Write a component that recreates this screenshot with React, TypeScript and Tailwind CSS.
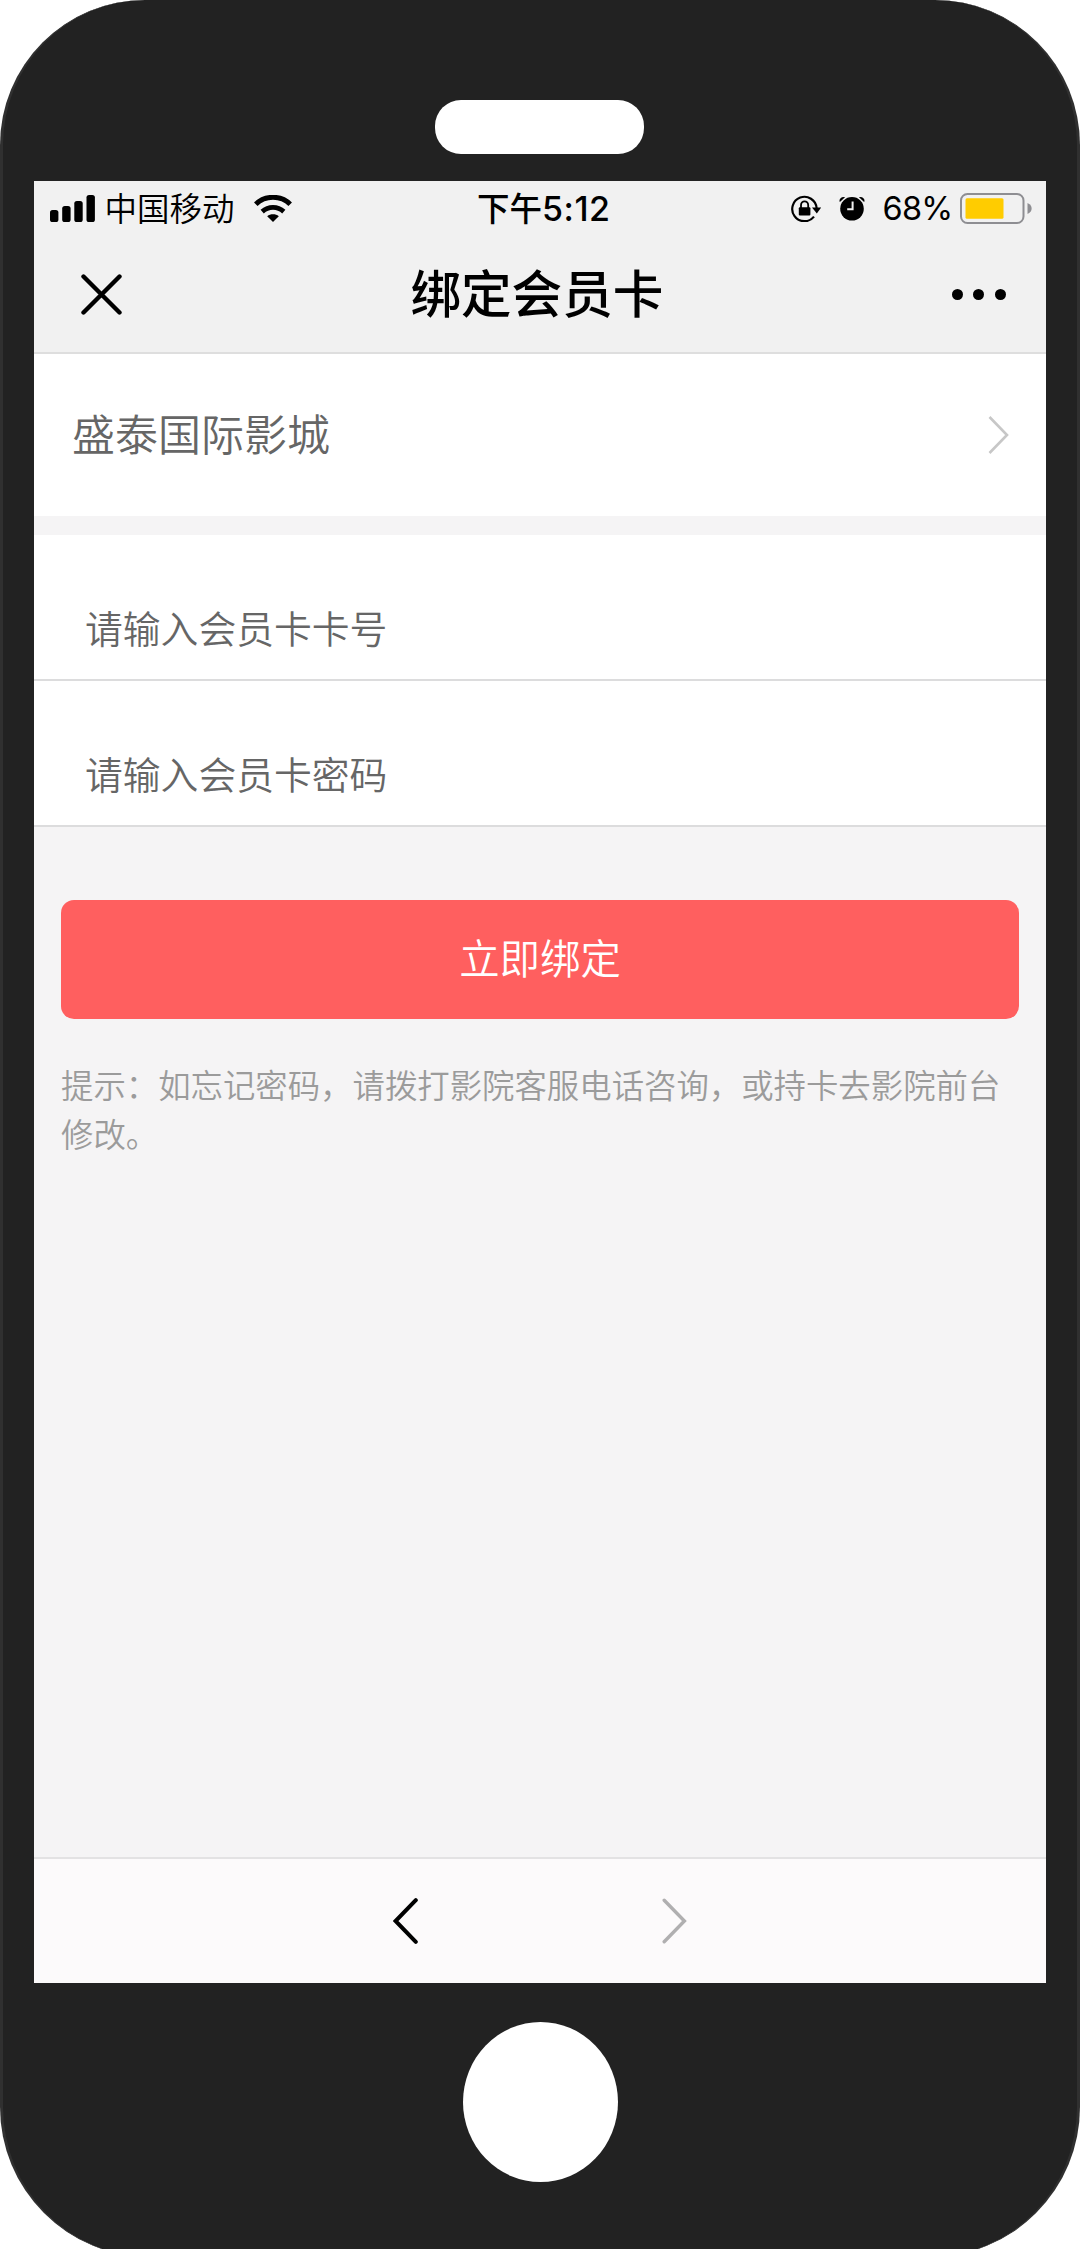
interface FieldRowProps {
  label: string;
}

function SignalIcon() {
  return (
    <svg width="45" height="27" viewBox="0 0 45 27">
      <rect x="0" y="15" width="8.4" height="12" rx="2.6" />
      <rect x="12.2" y="11" width="8.4" height="16" rx="2.6" />
      <rect x="24.3" y="6" width="8.4" height="21" rx="2.6" />
      <rect x="36.5" y="0" width="8.4" height="27" rx="2.6" />
    </svg>
  );
}

function WifiIcon() {
  return (
    <svg width="38" height="27" viewBox="0 0 38 27" fill="none" stroke="#000">
      <path d="M1.8 9.2C11.2 0 26.8 0 36.2 9.2" strokeWidth="5" />
      <path d="M8.2 16.6C14.4 11 23.6 11 29.8 16.6" strokeWidth="4.8" />
      <path
        d="M19 27L13.2 21.2C16.4 18.6 21.6 18.6 24.8 21.2Z"
        fill="#000"
        stroke="none"
      />
    </svg>
  );
}

function RotationLockIcon() {
  return (
    <svg width="30" height="27" viewBox="0 0 30 27" fill="none">
      <path
        d="M25.6 13A12.2 12.2 0 1 0 23 21.6"
        stroke="#000"
        strokeWidth="2.2"
      />
      <path d="M21 12.6H30.2L25.8 18.6Z" fill="#000" />
      <rect x="7.8" y="12.3" width="11.6" height="8.2" rx="1" fill="#000" />
      <path
        d="M10 13V10.2A3.6 3.9 0 0 1 17.2 10.2V13"
        stroke="#000"
        strokeWidth="1.8"
      />
    </svg>
  );
}

function AlarmIcon() {
  return (
    <svg width="26" height="25" viewBox="0 0 26 25" fill="none">
      <circle cx="13" cy="12.8" r="11.8" fill="#000" />
      <path d="M13.6 5.6V13.2H8.2" stroke="#f1f1f1" strokeWidth="2" />
      <path d="M0.4 5.4C0.4 2.4 2.6 0.6 6 1.2L1.2 5.8Z" fill="#000" />
      <path d="M25.6 5.4C25.6 2.4 23.4 0.6 20 1.2L24.8 5.8Z" fill="#000" />
    </svg>
  );
}

function BatteryIcon() {
  return (
    <svg width="72" height="31" viewBox="0 0 72 31" fill="none">
      <rect
        x="1"
        y="1"
        width="62.5"
        height="29"
        rx="6.5"
        stroke="#8e8e92"
        strokeWidth="2"
      />
      <rect x="5.5" y="5.2" width="38" height="20.6" rx="1.5" fill="#fc0" />
      <path d="M67.5 10C70.8 11.6 71.6 13.4 71.6 15.5S70.8 19.4 67.5 21Z" fill="#8e8e92" />
    </svg>
  );
}

function StatusBar() {
  return (
    <div className="flex h-[55px] items-center text-[32.5px] leading-none text-black">
      <div className="flex flex-1 items-center pl-[15.5px]">
        <SignalIcon />
        <span className="mb-[3px] ml-[10px] font-[350]">中国移动</span>
        <span className="ml-[19px]">
          <WifiIcon />
        </span>
      </div>
      <div className="flex items-center pl-[6px] font-medium">
        <span className="mb-[3px]">下午</span>
        <span className="font-[Inter] text-[34px] tracking-[0.5px]">5:12</span>
      </div>
      <div className="flex flex-1 items-center justify-end pr-[14px]">
        <RotationLockIcon />
        <span className="ml-[18px]">
          <AlarmIcon />
        </span>
        <span className="mt-[2px] ml-[17.5px] font-[Inter] text-[32.5px] font-normal tracking-[-0.7px]">
          68%
        </span>
        <span className="ml-[7.5px]">
          <BatteryIcon />
        </span>
      </div>
    </div>
  );
}

function NavBar() {
  return (
    <div className="flex h-[116px] items-center justify-between pr-[40px] pl-[47px]">
      <svg width="41" height="41" viewBox="0 0 41 41">
        <path
          d="M2.5 2.5L38.5 38.5M38.5 2.5L2.5 38.5"
          stroke="#000"
          strokeWidth="4.4"
          strokeLinecap="round"
        />
      </svg>
      <h1 className="mb-[5px] text-[50.6px] leading-none font-medium text-black">
        绑定会员卡
      </h1>
      <div className="flex gap-[10.6px]">
        <span className="size-[11px] rounded-full bg-black" />
        <span className="size-[11px] rounded-full bg-black" />
        <span className="size-[11px] rounded-full bg-black" />
      </div>
    </div>
  );
}

function FieldRow({ label }: FieldRowProps) {
  return (
    <div className="h-[146px] border-b-[2px] border-[#dcdcdd] bg-white pt-[73px] pl-[51px] text-[37.8px] leading-[38px] font-[350] text-[#666]">
      {label}
    </div>
  );
}

export default function App() {
  return (
    <div className="h-[2249px] w-[1080px] overflow-hidden bg-white font-['Noto_Sans_CJK_SC',sans-serif]">
      <div className="flex h-[2257px] flex-col items-center rounded-t-[145px] rounded-b-[150px] border-x-[3px] border-[#303030] bg-[#222]">
        <div className="mt-[100px] mr-[2px] h-[54px] w-[209px] rounded-[26px] bg-white" />

        <div className="mt-[27px] flex h-[1802px] w-[1012px] flex-col bg-[#f5f4f5]">
          <div className="h-[173px] border-b-[2px] border-[#dedede] bg-[#f1f1f1]">
            <StatusBar />
            <NavBar />
          </div>

          <div className="flex h-[162px] items-center justify-between bg-white pr-[37px] pl-[38px]">
            <span className="mb-[6px] text-[43px] leading-none font-[350] text-[#666]">
              盛泰国际影城
            </span>
            <svg width="21" height="38" viewBox="0 0 21 38" fill="none">
              <path d="M1.5 1L19 19L1.5 37" stroke="#c7c7c7" strokeWidth="2.6" />
            </svg>
          </div>

          <div className="mt-[19px]">
            <FieldRow label="请输入会员卡卡号" />
            <FieldRow label="请输入会员卡密码" />
          </div>

          <button className="mx-[27px] mt-[73px] h-[118.5px] rounded-[13px] bg-[#ff5f5f] pb-[5px] text-[40.4px] leading-none font-[350] text-white">
            立即绑定
          </button>

          <p className="mt-[40.5px] px-[27px] text-[32.4px] leading-[49px] font-[350] text-[#9b9b9b]">
            提示：如忘记密码，请拨打影院客服电话咨询，或持卡去影院前台修改。
          </p>

          <div className="mt-auto flex h-[126px] items-center justify-center gap-[244px] border-t-[2px] border-[#e3e2e3] bg-[#fcfafb]">
            <svg width="25" height="46" viewBox="0 0 25 46" fill="none">
              <path
                d="M22.8 2.2L2.6 23L22.8 43.8"
                stroke="#000"
                strokeWidth="4"
                strokeLinecap="round"
              />
            </svg>
            <svg width="25" height="46" viewBox="0 0 25 46" fill="none">
              <path
                d="M2.2 2.2L22.4 23L2.2 43.8"
                stroke="#b0afb0"
                strokeWidth="3.4"
                strokeLinecap="round"
              />
            </svg>
          </div>
        </div>

        <div className="mt-[39px] h-[160px] w-[155px] rounded-[50%] bg-white" />
      </div>
    </div>
  );
}
